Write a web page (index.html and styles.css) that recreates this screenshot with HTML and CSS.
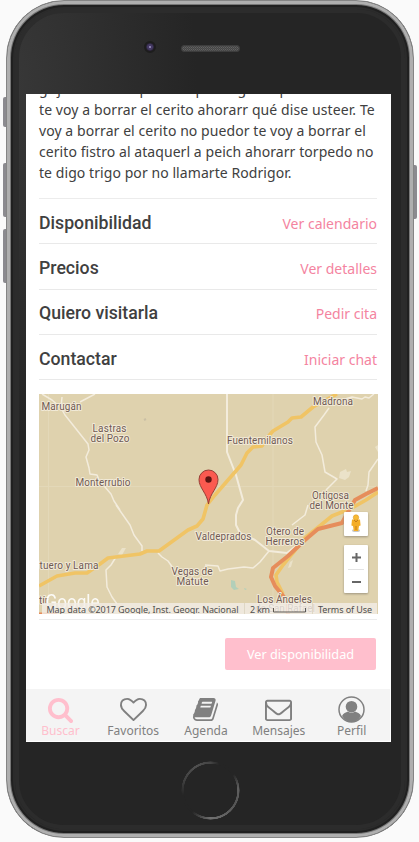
FILE: index.html
```html
<!DOCTYPE html>
<html lang="es">
<head>
<meta charset="utf-8">
<title>Perfil</title>
<link rel="stylesheet" href="styles.css">
</head>
<body>
<div class="device">
  <i class="key key-mute"></i><i class="key key-up"></i><i class="key key-down"></i><i class="key key-power"></i>
  <div class="phone">
    <div class="top">
      <span class="camera"></span>
      <svg class="speaker" width="59" height="7" viewBox="0 0 59 7"><defs><pattern id="mesh" width="2" height="2" patternUnits="userSpaceOnUse"><rect width="2" height="2" fill="#464646"/><rect width="1" height="1" fill="#626262"/><rect x="1" y="1" width="1" height="1" fill="#555"/></pattern></defs><rect x=".5" y=".5" width="58" height="6" rx="2.5" fill="url(#mesh)" stroke="#3d3d3d"/></svg>
    </div>
    <div class="screen">
      <main class="content">
        <p class="bio"><span class="l0">grijander de la pradera por la gloria pecador</span><span class="l1">te voy a borrar el cerito ahorarr qué dise usteer. Te</span><span class="l2">voy a borrar el cerito no puedor te voy a borrar el</span><span class="l3">cerito fistro al ataquerl a peich ahorarr torpedo no</span><span class="l4">te digo trigo por no llamarte Rodrigor.</span></p>
        <section class="rows">
          <div class="row"><h2>Disponibilidad</h2><a>Ver calendario</a></div>
          <div class="row"><h2>Precios</h2><a>Ver detalles</a></div>
          <div class="row"><h2>Quiero visitarla</h2><a>Pedir cita</a></div>
          <div class="row"><h2>Contactar</h2><a>Iniciar chat</a></div>
        </section>
        <svg class="map" width="339" height="220" viewBox="39 394 339 220">
          <rect x="39" y="394" width="339" height="220" fill="#dfd2ae"/>
          <path d="M48.500 394V614M273 394V614M39 486.500H378" stroke="#e3d8b8" fill="none"/>
          <g fill="#ebe2c9"><path d="M340 472l6-3 1 3 4-1-2 6-4 3-6-2z"/><path d="M118 554l4-6 4 0-4 7zM290 562l3-2-2 7-3 1z"/><path d="M375 447l3-2v7z"/></g>
          <path d="M231 580l4 1 1 6 3 2-5 1-3-3zM244 588l3 1-2 1z" fill="#b2cfb9"/>
          <path d="M144 420l2-1" stroke="#cabfa5" stroke-width="2"/>
          <g fill="none" stroke="#f3ecdc" stroke-width="1.500" stroke-linejoin="round">
            <path d="M42 394L52 400 61 408 65 415 88 444 89 450 86 457 89 468 90 474 97 475 99 480 111 494 114 501 120 510M95 394L80 402M62 397L61 408M116 505L130 525 134 535 142 546V551M158 553L162 557 168 561 173 568M116 557L111 565 106 570 107 587 112 597 117 604"/>
            <path d="M329 408L324 415 315 427 316 442 322 455 325 472 337 479 326 490M378 459L369 472 368 485 366 491M335 402L345 399 352 397 362 399 365 397 369 398 374 394M269 551L260 562 253 568 244 567 228 569 220 571 218 566 205 565M308 505L305 515 292 525"/>
            <path stroke-width="2" d="M227 394V452L236 475 243 500 238 508 236 515 236 525 240 533 255 540 269 551 287 553 296 546"/>
          </g>
          <g fill="none" stroke-linejoin="round">
            <path stroke="#f0c465" stroke-width="3.600" d="M39 586L57 576 75 573 87 573 100 564 108 558 140 554 147 551 159 551 188 530 197 526 203 519 207 505 215 495 235 472 241 465 247 453 253 447 262 446 267 438 273 431 288 422 292 418 301 417 313 407 337 394M378 492L366 500 352 508 332 516 305 538 283 565 276 575 277 582 283 594"/>
            <path stroke="#e68d5b" stroke-width="4" d="M378 488L366 494 355 500 348 512 342 523 318 529 305 540 288 556 273 568 271 577 275 586 288 602V614"/>
          </g>
          <path d="M39 613.500h18" stroke="#e68d5b" stroke-width="2"/>
          <g class="places">
            <text x="41.500" y="409.500" textLength="40">Marugán</text>
            <text x="92.500" y="431.500" textLength="34">Lastras</text><text x="90.500" y="441.500" textLength="39">del Pozo</text>
            <text x="75.500" y="486" textLength="55">Monterrubio</text>
            <text x="313" y="404.500" textLength="40">Madrona</text>
            <text x="227" y="443.500" textLength="66">Fuentemilanos</text>
            <text x="312" y="498.500" textLength="37">Ortigosa</text><text x="309.500" y="508.500" textLength="44">del Monte</text>
            <text x="195.500" y="540" textLength="56">Valdeprados</text>
            <text x="266" y="535" textLength="38">Otero de</text><text x="265.500" y="545" textLength="39">Herreros</text>
            <text x="39.500" y="569" textLength="59">tuero y Lama</text>
            <text x="171.500" y="574.500" textLength="41">Vegas de</text><text x="176.500" y="584.500" textLength="32">Matute</text>
            <text x="257" y="602.500" textLength="55">Los Ángeles</text><text x="255" y="612" textLength="60">de San Rafael</text>
            <text x="39" y="604">tír</text>
          </g>
          <text class="logo" x="45.500" y="609" textLength="54" lengthAdjust="spacingAndGlyphs">Google</text>
          <rect x="42" y="603" width="335" height="11" fill="#f2eee7" opacity=".8"/>
          <path d="M244.500 603v11M312.500 603v11" stroke="#ded7c4"/>
          <g class="legal"><text x="46.500" y="613" textLength="192">Map data ©2017 Google, Inst. Geogr. Nacional</text><text x="250" y="613" textLength="20">2 km</text><text x="318" y="613" textLength="54">Terms of Use</text></g>
          <path d="M273.500 608v4h32v-4" fill="none" stroke="#5c5852"/>
          <path d="M208.500 504C207 493 199 488 199 479.500a9.500 9.500 0 0 1 19 0C218 488 210 493 208.500 504z" fill="#fb5a50" stroke="#963d35"/>
          <circle cx="208.500" cy="479.500" r="3.200" fill="#5e1512"/>
          <g class="controls"><rect x="344" y="512" width="24" height="24" rx="1"/><rect x="344" y="545" width="24" height="48" rx="1"/></g>
          <path d="M348 569.500h16" stroke="#e3e3e3"/>
          <path d="M352 557.500h9M356.500 553v9M352 582h9" stroke="#666" stroke-width="2"/>
          <ellipse cx="356" cy="530.500" rx="4" ry="1.500" fill="#c7c7c7"/>
          <path d="M352 519.500h8l.6 6-1.600.5-.8 5h-4.400l-.8-5-1.600-.5z" fill="#f4ad27"/><path d="M354 520l2 2 2-2M356 526v4" fill="none" stroke="#c47d19"/><circle cx="356" cy="517.500" r="2.700" fill="#f7b933" stroke="#dc9824" stroke-width=".6"/>
        </svg>
        <div class="action"><button>Ver disponibilidad</button></div>
      </main>
      <nav>
        <a class="active"><svg viewBox="0 0 1792 1792"><path d="M1216 832q0-185-131.500-316.500t-316.500-131.500-316.500 131.500-131.500 316.500 131.500 316.500 316.500 131.500 316.500-131.500 131.500-316.500zm512 832q0 52-38 90t-90 38q-54 0-90-38l-343-342q-179 124-399 124-143 0-273.500-55.500t-225-150-150-225-55.500-273.500 55.500-273.500 150-225 225-150 273.500-55.500 273.500 55.500 225 150 150 225 55.500 273.500q0 220-124 399l343 343q37 37 37 90z"/></svg><span>Buscar</span></a>
        <a><svg viewBox="0 0 1792 1792"><path d="M1664 596q0-81-21.500-143t-55-98.500-81.500-59.500-94-31-98-8-112 25.500-110.500 64-86.500 72-60 61.500q-18 22-49 22t-49-22q-24-28-60-61.500t-86.500-72-110.500-64-112-25.500-98 8-94 31-81.500 59.500-55 98.500-21.500 143q0 168 187 355l581 560 580-559q188-188 188-356zm128 0q0 221-229 450l-623 600q-18 18-44 18t-44-18l-624-602q-10-8-27.500-26t-55.500-65.500-68-97.500-53.500-121-23.500-138q0-220 127-344t351-124q62 0 126.500 21.500t120 58 95.500 68.500 76 68q36-36 76-68t95.500-68.500 120-58 126.500-21.500q224 0 351 124t127 344z"/></svg><span>Favoritos</span></a>
        <a><svg viewBox="0 0 1792 1792"><path d="M1703 478q40 57 18 129l-275 906q-19 64-76.500 107.500t-122.500 43.500h-923q-77 0-148.500-53.500t-99.500-131.500q-24-67-2-127 0-4 3-27t4-37q1-8-3-21.500t-3-19.500q2-11 8-21t16.500-23.500 16.500-23.500q23-38 45-91.500t30-91.500q3-10 .5-30t-.5-28q3-11 17-28t17-23q21-36 42-92t25-90q1-9-2.500-32t.5-28q4-13 22-30.500t22-22.500q19-26 42.500-84.500t27.500-96.500q1-8-3-25.500t-2-26.500q2-8 9-18t18-23 17-21q8-12 16.500-30.500t15-35 16-36 19.500-32 26.500-23.500 36-11.500 47.500 5.500l-1 3q38-9 51-9h761q74 0 114 56t18 130l-274 906q-36 119-71.500 153.500t-128.500 34.500h-869q-27 0-38 15-11 16-1 43 24 70 144 70h923q29 0 56-15.500t35-41.500l300-987q7-22 5-57 38 15 59 43zm-1064 2q-4 13 2 22.500t20 9.500h608q13 0 25.500-9.500t16.500-22.500l21-64q4-13-2-22.500t-20-9.500h-608q-13 0-25.500 9.500t-16.500 22.500zm-83 256q-4 13 2 22.500t20 9.500h608q13 0 25.500-9.500t16.500-22.500l21-64q4-13-2-22.500t-20-9.500h-608q-13 0-25.500 9.500t-16.500 22.500z"/></svg><span>Agenda</span></a>
        <a><svg viewBox="0 0 1792 1792"><path d="M1664 1504v-768q-32 36-69 66-268 206-426 338-51 43-83 67t-86.500 48.500-102.500 24.500h-2q-48 0-102.500-24.500t-86.500-48.500-83-67q-158-132-426-338-37-30-69-66v768q0 13 9.500 22.500t22.500 9.500h1472q13 0 22.500-9.500t9.500-22.500zm0-1051v-24.500l-.5-13-3-12.500-5.500-9-9-7.500-14-2.500h-1472q-13 0-22.500 9.500t-9.500 22.500q0 168 147 284 193 152 401 317 6 5 35 29.500t46 37.500 44.500 31.500 50.500 27.500 43 9h2q20 0 43-9t50.500-27.500 44.500-31.500 46-37.500 35-29.500q208-165 401-317 54-43 100.500-115.500t46.500-131.500zm128-37v1088q0 66-47 113t-113 47h-1472q-66 0-113-47t-47-113v-1088q0-66 47-113t113-47h1472q66 0 113 47t47 113z"/></svg><span>Mensajes</span></a>
        <a><svg viewBox="0 0 27 27"><circle cx="13.500" cy="13.500" r="12.500" fill="none" stroke="#808080" stroke-width="1.500"/><circle cx="13.500" cy="10.700" r="5.800"/><path d="M4 20C5 17.200 8 16.600 10 15.600q3.500 2.400 7 0c2 1 5 1.600 6 4.400Q19.500 26 13.500 26T4 20z"/></svg><span>Perfil</span></a>
      </nav>
    </div>
    <div class="bottom"><span class="home"></span></div>
  </div>
</div>
</body>
</html>
```
FILE: styles.css
```css
* { box-sizing: border-box; }
body { margin: 0; height: 842px; overflow: hidden; background: #fafafa; font-family: "Noto Sans", sans-serif; color: #404040; }
.device { position: relative; width: 419px; height: 842px; padding: 0 6px; }
.key { position: absolute; left: 3px; width: 4px; background: #8b8a8f; border-radius: 2px 0 0 2px; }
.key-mute { top: 97px; height: 30px; }
.key-up { top: 163px; height: 54px; }
.key-down { top: 229px; height: 54px; }
.key-power { left: 413px; top: 165px; height: 54px; border-radius: 0 2px 2px 0; }
.phone {
  position: relative; width: 408px; height: 838px; border-radius: 58px;
  background: radial-gradient(ellipse at 0 10%, #383838 0, #252525 33%);
  border: 1px solid #858585;
  box-shadow: inset 0 0 0 3px #afafaf, inset 0 0 0 4px #777, inset 0 0 0 6px #202020, inset 0 0 0 8px #2b2b2b;
}
.phone::before { content: ""; position: absolute; inset: 8px; border: 4px solid #2c2c2c; border-radius: 49px; }
.top { height: 93px; display: flex; padding: 40px 0 0 137px; gap: 31px; }
.camera { width: 12px; height: 12px; border-radius: 50%; border: 2px solid #1d1d1d; background: radial-gradient(circle, #8b7fae 0 1px, #443963 1.500px 2.500px, #26212f 4px); }
.speaker { margin-top: 4px; margin-left: -6px; }
.screen { position: relative; margin-left: 19px; width: 365px; height: 648px; background: #fff; display: flex; flex-direction: column; overflow: hidden; }
.content { height: 595px; padding: 0 14px 0 13px; overflow: hidden; }
.bio { margin: -16px 0 0; height: 120px; font-size: 14px; line-height: 21px; white-space: nowrap; letter-spacing: .07px; }
.bio span { display: block; width: max-content; }
.bio .l1 { letter-spacing: .095px; }
.rows { width: 338px; height: 183px; border-top: 1px solid #ececec; }
.row { height: 45.300px; display: flex; justify-content: space-between; align-items: center; border-bottom: 1px solid #e9e9e9; padding-top: 3px; }
.row h2 { margin: 0; font: 500 17.700px/24px Roboto, sans-serif; }
.row a { font-size: 14px; line-height: 22px; color: #f4849f; padding-top: 2px; }
.map { display: block; margin-top: 13px; overflow: hidden; }
.places { font: 10px Roboto, sans-serif; fill: #705a54; stroke: #f1e9d6; stroke-width: 2px; paint-order: stroke; stroke-linejoin: round; }
.logo { font: 400 20px Roboto, sans-serif; fill: #fff; opacity: .9; }
.legal { font: 9px "Noto Sans", sans-serif; fill: #505050; }
.controls { fill: #fff; filter: drop-shadow(0 1px 1px #9d937e); }
.action { width: 338px; margin-top: 5px; padding-top: 18px; border-top: 1px solid #ececec; display: flex; justify-content: flex-end; }
button { width: 151px; height: 32px; margin-right: 1px; border: 0; border-radius: 2px; background: #ffbfcd; color: #fff; font: 12.700px "Noto Sans", sans-serif; padding: 0; }
nav { width: 364px; height: 52px; display: grid; grid-template-columns: repeat(5, 72.800px); background: #f4f4f4; margin-left: -2px; box-shadow: 2px 0 #f4f4f4; }
nav a { display: flex; flex-direction: column; align-items: center; padding-top: 7px; color: #808080; }
nav svg { width: 27px; height: 27px; flex: none; fill: currentColor; }
nav span { font-size: 12px; line-height: 16px; }
nav .active { color: #ffbfcd; }
.bottom { display: flex; padding: 19px 0 0 174px; }
.home { width: 59px; height: 59px; border-radius: 50%; background: conic-gradient(from 0deg, #444 0deg, #252525 18deg 55deg, #606060 85deg, #555 120deg, #707070 180deg, #252525 220deg 260deg, #404040 290deg, #505050 330deg, #444 360deg); -webkit-mask: radial-gradient(circle, transparent 26.500px, #000 27px 28.800px, transparent 29.300px); mask: radial-gradient(circle, transparent 26.500px, #000 27px 28.800px, transparent 29.300px); }
```
